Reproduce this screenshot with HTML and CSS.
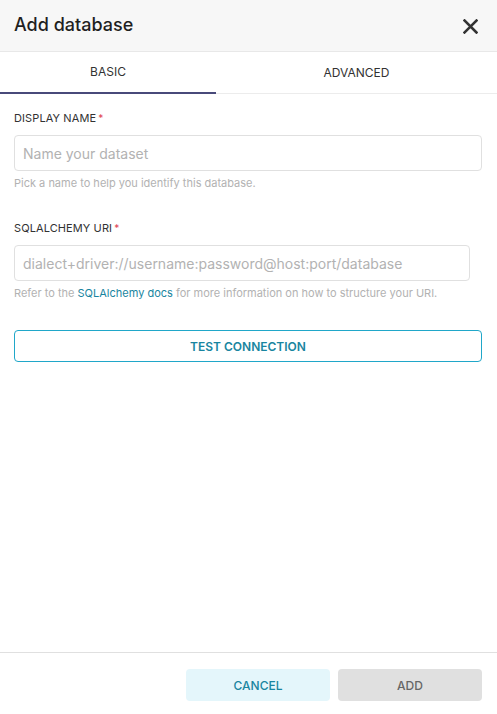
FILE: index.html
```html
<!DOCTYPE html>
<html lang="en">
<head>
<meta charset="utf-8">
<title>Add database</title>
<link rel="stylesheet" href="styles.css">
</head>
<body>
<div class="modal">
  <header class="modal-header">
    <h1 class="modal-title">Add database</h1>
    <button class="close" aria-label="Close">
      <svg width="15" height="15" viewBox="0 0 15 15"><path d="M1.5 1.5 L13.5 13.5 M13.5 1.5 L1.5 13.5" stroke="#323232" stroke-width="2.5" stroke-linecap="square" fill="none"/></svg>
    </button>
  </header>
  <nav class="tabs">
    <div class="tab tab-active">BASIC</div>
    <div class="tab">ADVANCED</div>
  </nav>
  <main class="body">
    <div class="field">
      <label class="label">DISPLAY NAME<span class="req">*</span></label>
      <div class="input">Name your dataset</div>
      <div class="help">Pick a name to help you identify this database.</div>
    </div>
    <div class="field field-uri">
      <label class="label">SQLALCHEMY URI<span class="req">*</span></label>
      <div class="input uri">dialect+driver://username:password@host:port/database</div>
      <div class="help">Refer to the <a class="link">SQLAlchemy docs</a> for more information on how to structure your URI.</div>
    </div>
    <button class="test-btn">TEST CONNECTION</button>
  </main>
  <footer class="footer">
    <button class="btn btn-cancel">CANCEL</button>
    <button class="btn btn-add">ADD</button>
  </footer>
</div>
</body>
</html>
```
FILE: styles.css
```css
* { box-sizing: border-box; }
html, body { margin: 0; padding: 0; }
body {
  font-family: Inter, "Noto Sans", sans-serif;
  background: #fff;
  color: #323232;
}
.modal {
  width: 497px;
  height: 714px;
  display: flex;
  flex-direction: column;
}
.modal-header {
  height: 52px;
  background: #f7f7f7;
  border-bottom: 1px solid #e8e8e8;
  display: flex;
  align-items: center;
  justify-content: space-between;
  padding: 0 19px 0 14px;
}
.modal-title {
  margin: 0;
  font-size: 18px;
  font-weight: 500;
  color: #1f1f1f;
  position: relative;
  top: -1px;
}
.close {
  border: 0;
  background: none;
  padding: 0;
  width: 15px;
  height: 15px;
  display: flex;
  position: relative;
  top: 1px;
}
.tabs {
  display: flex;
  height: 42px;
  border-bottom: 1px solid #ececec;
}
.tab {
  font-size: 12px;
  color: #323232;
  display: flex;
  align-items: center;
  justify-content: center;
  width: 281px;
  padding-bottom: 1px;
}
.tab-active {
  width: 216px;
  border-bottom: 2px solid #484a7a;
  margin-bottom: -1px;
}
.body {
  flex: 1;
  padding: 18px 15px 0 14px;
}
.field { margin-bottom: 32px; }
.field-uri { margin-bottom: 30px; }
.label {
  display: block;
  font-size: 11px;
  color: #323232;
  letter-spacing: 0.1px;
  line-height: 13px;
  margin-bottom: 10px;
}
.req {
  color: #e04355;
  margin-left: 2px;
  font-size: 10px;
}
.input {
  height: 36px;
  border: 1px solid #e0e0e0;
  border-radius: 4px;
  padding: 0 8px;
  font-size: 14px;
  color: #b2b2b2;
  display: flex;
  align-items: center;
}
.uri { width: 456px; }
.help {
  font-size: 11px;
  color: #b2b2b2;
  margin-top: 5px;
  line-height: 14px;
}
.link { color: #1985a0; }
.test-btn {
  display: block;
  width: 468px;
  height: 32px;
  border: 1px solid #20a7c9;
  border-radius: 4px;
  background: #fff;
  color: #1985a0;
  font-family: inherit;
  font-weight: 600;
  font-size: 12px;
  padding: 0;
}
.footer {
  height: 62px;
  border-top: 1px solid #e0e0e0;
  display: flex;
  justify-content: flex-end;
  align-items: flex-start;
  gap: 8px;
  padding: 16px 15px 0 0;
}
.btn {
  width: 144px;
  height: 32px;
  border: 0;
  border-radius: 4px;
  font-family: inherit;
  font-size: 12px;
  font-weight: 500;
  padding: 0;
}
.btn-cancel {
  background: #e4f6fb;
  color: #1985a0;
}
.btn-add {
  background: #e0e0e0;
  color: #666;
}
```
